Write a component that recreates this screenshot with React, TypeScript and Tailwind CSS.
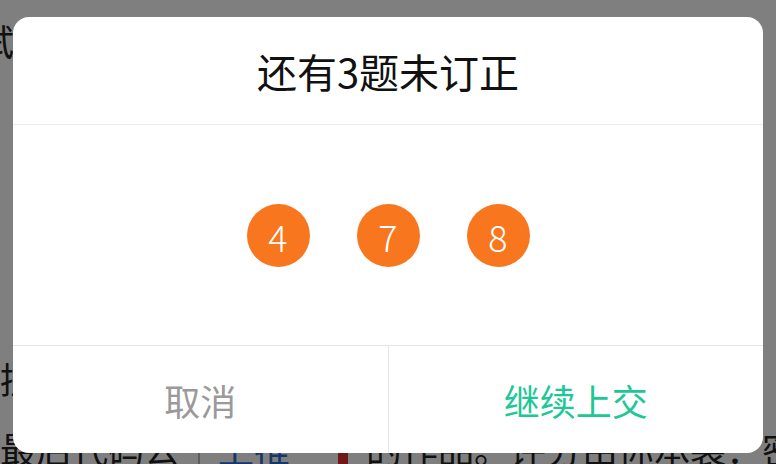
const font = "font-['Noto_Sans_CJK_SC','Noto_Sans',sans-serif]";

const pending = [4, 7, 8];

function PageBehind() {
  return (
    <div className={`flex h-full flex-col ${font} text-[36px] leading-none text-[#222]`}>
      <div className="mt-[22px] h-[40px] -ml-[22px] whitespace-nowrap">试卷</div>
      <div className="mt-[205px] h-[2px] w-full bg-[#b4b4b4]" />
      <div className="mt-[97px] h-[40px] whitespace-nowrap">控制</div>
      <div className="mt-[34px] flex items-start gap-[18px] whitespace-nowrap">
        <span>最后代码公</span>
        <span className="flex h-[40px] w-[46px] justify-center bg-[#e4e4e4]">
          <span className="h-full w-[2px] bg-[#bbb]" />
        </span>
        <span className="text-[#2f6fd6]">上推</span>
        <span className="ml-[30px] mt-[14px] h-[26px] w-[26px] rounded-full border-[5px] border-[#e03030]" />
        <span>的作品。评分由你承袭：密</span>
      </div>
    </div>
  );
}

function Dialog() {
  return (
    <div className={`flex w-[750px] flex-col overflow-hidden rounded-[16px] bg-white ${font}`}>
      <div className="flex h-[108px] items-center justify-center border-b border-[#ebebeb] text-[40px] text-[#111]">
        还有3题未订正
      </div>
      <div className="flex h-[220px] items-center justify-center gap-[47px] pt-[1px]">
        {pending.map((n) => (
          <div
            key={n}
            className="flex h-[63px] w-[63px] items-center justify-center rounded-full bg-[#f7761e] text-[36px] font-light text-white"
          >
            {n}
          </div>
        ))}
      </div>
      <div className="flex h-[108px] border-t border-[#e6e6e6] text-[36px]">
        <button className="flex flex-1 items-center justify-center border-r border-[#e6e6e6] text-[#9a9a9a]">
          取消
        </button>
        <button className="flex flex-1 items-center justify-center text-[#1dc796]">继续上交</button>
      </div>
    </div>
  );
}

export default function App() {
  return (
    <div className="relative h-[464px] w-[776px] overflow-hidden bg-white">
      <PageBehind />
      <div className="absolute inset-0 bg-black/50" />
      <div className="absolute left-[13px] top-[17px]">
        <Dialog />
      </div>
    </div>
  );
}
